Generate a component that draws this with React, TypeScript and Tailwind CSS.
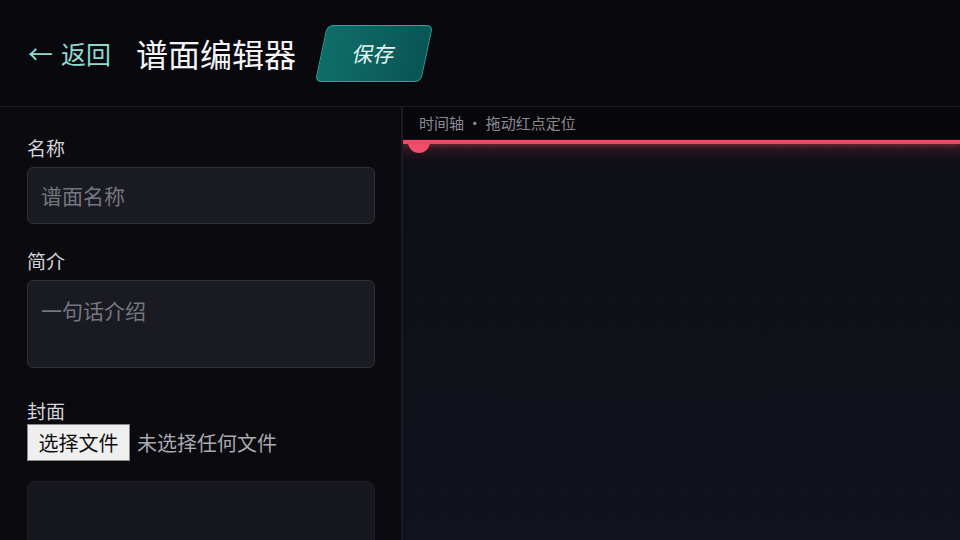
import React from "react";

const font = { fontFamily: '"Noto Sans CJK SC", "Noto Sans", sans-serif' };

export default function App() {
  return (
    <div
      className="w-[960px] h-[540px] overflow-hidden flex flex-col bg-[#0a0a0f] text-white"
      style={font}
    >
      <header className="h-[107px] shrink-0 flex items-center pl-[28px] bg-[#09080d] border-b border-[#1e1e26]">
        <div className="flex items-center text-[25px] text-[#8fd9d1] leading-none">
          <span className="mr-[8px]">←</span>
          <span>返回</span>
        </div>
        <h1 className="ml-[25px] text-[32px] leading-none font-normal text-[#f4f4f6]">谱面编辑器</h1>
        <button className="ml-[25px] w-[106px] h-[57px] -skew-x-[12deg] rounded-[6px] border border-[#2fa59b] bg-gradient-to-r from-[#0f6e69] to-[#0a5556] text-[21px] text-[#e4f4f2] flex items-center justify-center">
          保存
        </button>
      </header>

      <div className="flex-1 flex min-h-0">
        <aside className="w-[403px] shrink-0 border-r-2 border-[#1a1a22] bg-[#0a0a0f] pl-[27px] pr-[26px] pt-[27px] flex flex-col overflow-hidden">
          <label className="shrink-0 text-[19px] leading-[27px] text-[#d4d4da] mb-[6px]">名称</label>
          <div className="shrink-0 h-[57px] rounded-[6px] border border-[#2e2f37] bg-[#191a22] px-[13px] flex items-center text-[21px] text-[#76767f]">
            谱面名称
          </div>
          <label className="shrink-0 mt-[23px] text-[19px] leading-[27px] text-[#d4d4da] mb-[6px]">简介</label>
          <div className="shrink-0 h-[88px] rounded-[6px] border border-[#2e2f37] bg-[#191a22] px-[13px] pt-[14px] text-[21px] leading-[30px] text-[#76767f]">
            一句话介绍
          </div>
          <label className="shrink-0 mt-[29px] text-[19px] leading-[27px] text-[#d4d4da]">封面</label>
          <div className="shrink-0 flex items-center h-[37px]">
            <div className="h-[37px] w-[103px] bg-[#efefef] border border-[#8a8a8a] flex items-center justify-center text-[20px] text-[#111]">
              选择文件
            </div>
            <span className="ml-[7px] text-[20px] text-[#a9a9b1]">未选择任何文件</span>
          </div>
          <div className="shrink-0 mt-[20px] h-[90px] rounded-[8px] border border-[#1c1d25] bg-[#16171f]" />
        </aside>

        <main className="flex-1 relative flex flex-col bg-gradient-to-b from-[#0e0e15] to-[#11121c] overflow-hidden">
          <div className="absolute inset-0 bg-[radial-gradient(circle,rgba(255,255,255,0.012)_1.5px,transparent_2px)] bg-[size:24px_24px] bg-[position:6px_10px]" />
          <div className="absolute left-[5px] top-[24px] w-[22px] h-[22px] rounded-full bg-[#f2506f]" />
          <div className="relative z-20 h-[33px] bg-[#07070c] pl-[16px] flex items-center text-[15px] text-[#8a8a93] border-b border-[#2a0d18]">
            时间轴 · 拖动红点定位
          </div>
          <div className="relative z-10 h-[4px] bg-[#ef4868] shadow-[0_0_6px_rgba(239,72,104,0.6)]" />
          <div className="relative h-[18px] bg-gradient-to-b from-[rgba(239,72,104,0.16)] to-transparent" />
        </main>
      </div>
    </div>
  );
}
